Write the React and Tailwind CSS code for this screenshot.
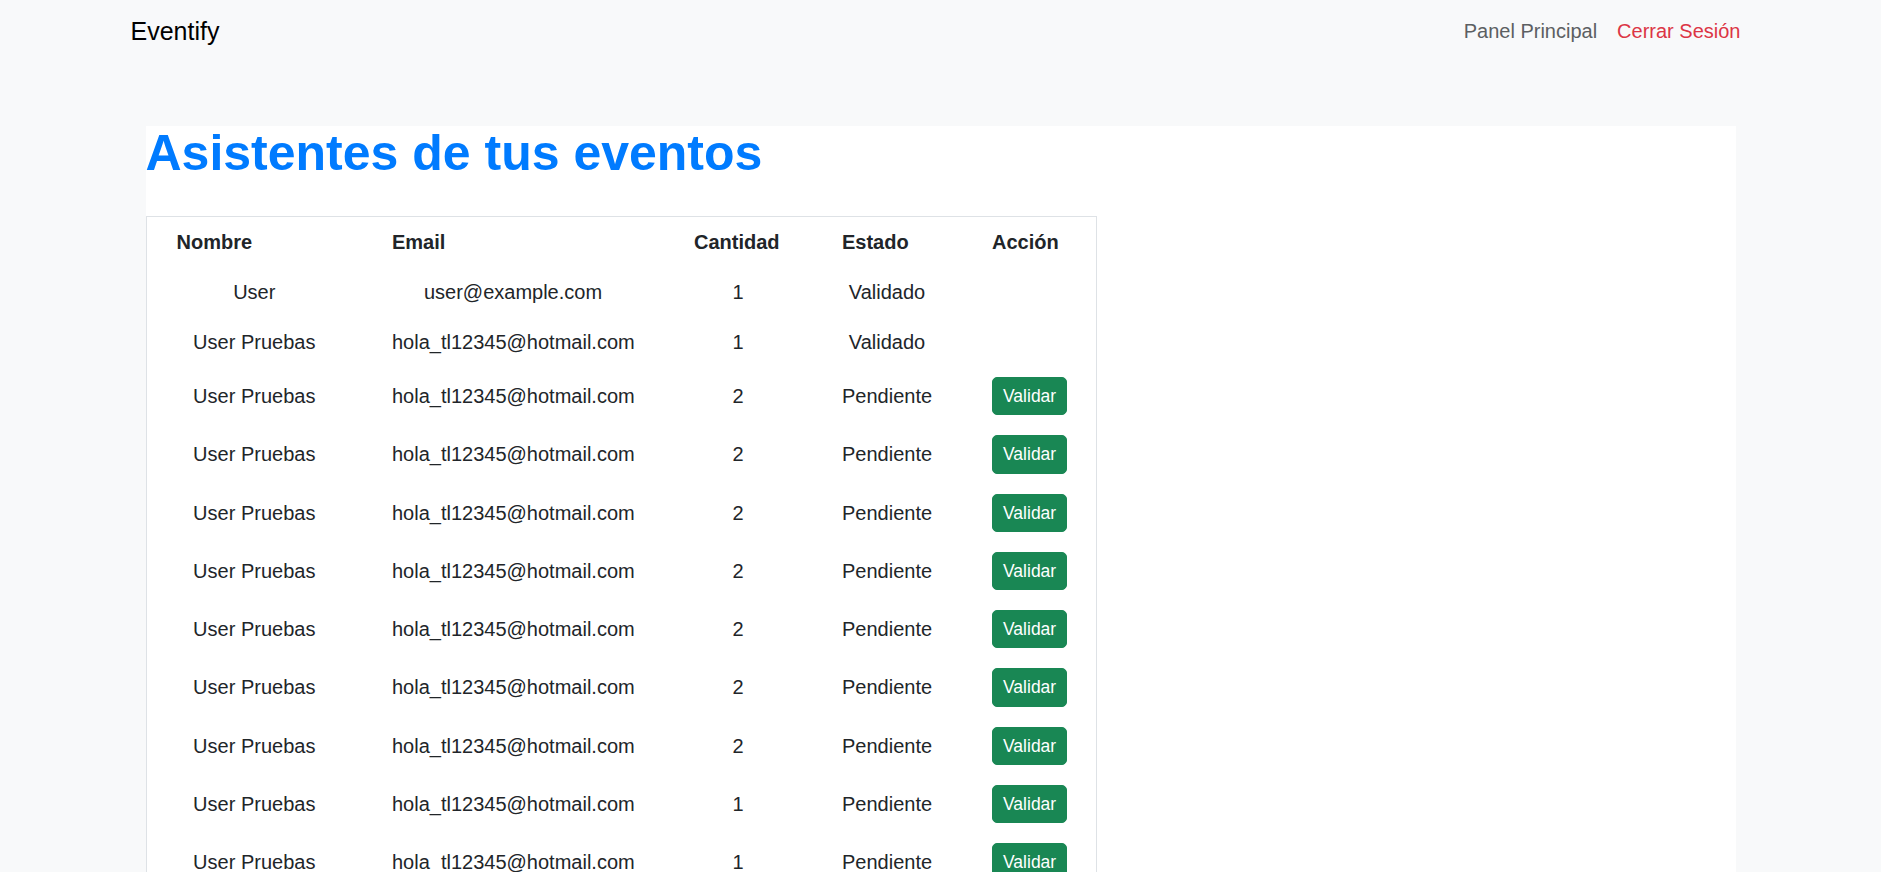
const attendees = [
  { name: "User", email: "user@example.com", qty: 1, status: "Validado" },
  { name: "User Pruebas", email: "hola_tl12345@hotmail.com", qty: 1, status: "Validado" },
  { name: "User Pruebas", email: "hola_tl12345@hotmail.com", qty: 2, status: "Pendiente" },
  { name: "User Pruebas", email: "hola_tl12345@hotmail.com", qty: 2, status: "Pendiente" },
  { name: "User Pruebas", email: "hola_tl12345@hotmail.com", qty: 2, status: "Pendiente" },
  { name: "User Pruebas", email: "hola_tl12345@hotmail.com", qty: 2, status: "Pendiente" },
  { name: "User Pruebas", email: "hola_tl12345@hotmail.com", qty: 2, status: "Pendiente" },
  { name: "User Pruebas", email: "hola_tl12345@hotmail.com", qty: 2, status: "Pendiente" },
  { name: "User Pruebas", email: "hola_tl12345@hotmail.com", qty: 2, status: "Pendiente" },
  { name: "User Pruebas", email: "hola_tl12345@hotmail.com", qty: 1, status: "Pendiente" },
  { name: "User Pruebas", email: "hola_tl12345@hotmail.com", qty: 1, status: "Pendiente" },
  { name: "User Pruebas", email: "hola_tl12345@hotmail.com", qty: 1, status: "Pendiente" },
];

const App = () => {
  return (
    <div className="min-h-screen bg-[#f8f9fa] font-['Liberation_Sans',Arial,sans-serif] text-[20px] leading-[1.5] text-[#212529]">
      {/* Navbar */}
      <nav className="py-[10px]">
        <div className="mx-auto flex w-[1650px] items-center justify-between px-[15px]">
          <a className="py-[6px] text-[25px] leading-[1.2] text-black">Eventify</a>
          <div className="flex">
            <a className="px-[10px] py-[6px] text-[#5c5f62]">Panel Principal</a>
            <a className="py-[6px] pl-[10px] pr-[10px] text-[#dc3545]">Cerrar Sesión</a>
          </div>
        </div>
      </nav>

      {/* Content */}
      <div className="mx-auto mt-[64px] w-[1650px] px-[15px]">
        <div className="mx-[15px] bg-white pb-10">
          <h1 className="mb-[35px] text-[50px] font-bold leading-[1.1] text-[#007bff]">
            Asistentes de tus eventos
          </h1>

          <table className="w-[950px] table-fixed border-collapse border border-[#dee2e6]">
            <colgroup>
              <col className="w-[216px]" />
              <col className="w-[302px]" />
              <col className="w-[148px]" />
              <col className="w-[150px]" />
              <col className="w-[134px]" />
            </colgroup>
            <thead>
              <tr>
                <th className="px-[30px] py-[10px] text-left font-bold">Nombre</th>
                <th className="px-[30px] py-[10px] text-left font-bold">Email</th>
                <th className="px-[30px] py-[10px] text-left font-bold">Cantidad</th>
                <th className="px-[30px] py-[10px] text-left font-bold">Estado</th>
                <th className="px-[30px] py-[10px] text-left font-bold">Acción</th>
              </tr>
            </thead>
            <tbody>
              {attendees.map((a, i) => (
                <tr key={i}>
                  <td className="whitespace-nowrap px-[30px] py-[10px] text-center">{a.name}</td>
                  <td className="whitespace-nowrap px-[30px] py-[10px] text-center">{a.email}</td>
                  <td className="px-[30px] py-[10px] text-center">{a.qty}</td>
                  <td className="px-[30px] py-[10px] text-center">{a.status}</td>
                  <td className="whitespace-nowrap px-[30px] py-[10px] text-center">
                    {a.status === "Pendiente" && (
                      <button className="rounded-[5px] border border-[#198754] bg-[#198754] px-[10px] py-[5px] text-[17.5px] leading-[1.5] text-white">
                        Validar
                      </button>
                    )}
                  </td>
                </tr>
              ))}
            </tbody>
          </table>
        </div>
      </div>
    </div>
  );
};

export default App;
